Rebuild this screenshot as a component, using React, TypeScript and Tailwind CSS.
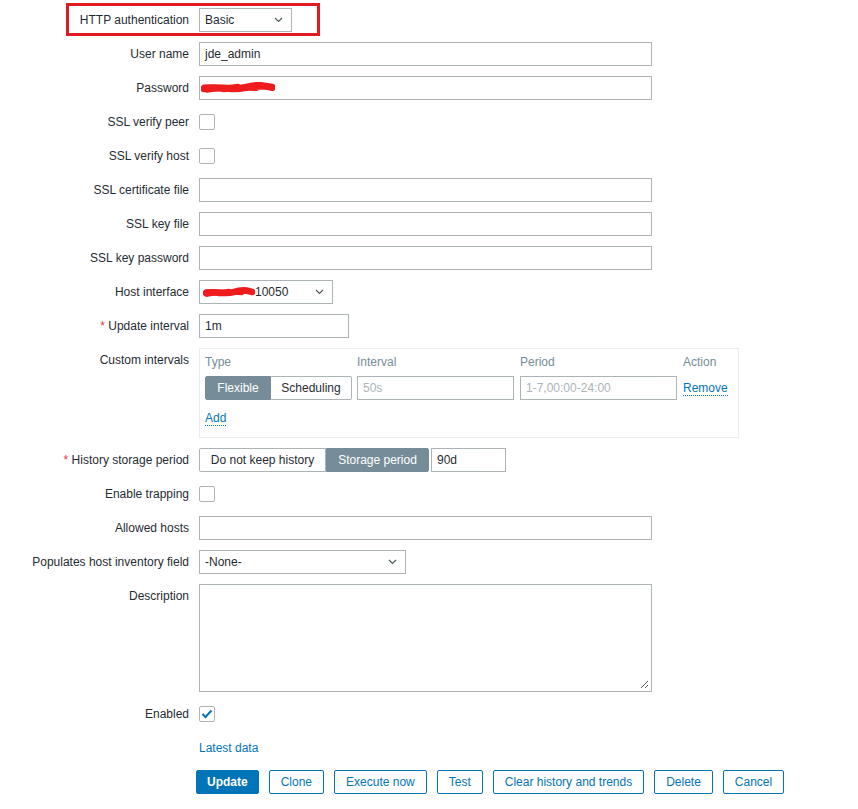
import { ReactNode } from 'react';

const label = 'w-[189px] shrink-0 text-right leading-[24px]';
const input = 'h-[24px] border border-[#acb4b8] bg-white px-[5px] leading-[22px]';

const Chevron = () => (
  <svg width="9" height="6" viewBox="0 0 9 6" className="shrink-0">
    <polyline points="1,1 4.5,4.5 8,1" fill="none" stroke="#4f5b61" strokeWidth="1.2" />
  </svg>
);

// hand-drawn red marker strokes hiding a value
const Scribble = ({ w, h }: { w: number; h: number }) => (
  <svg width={w} height={h} viewBox={`0 0 ${w} ${h}`} className="shrink-0">
    <path
      d={`M3 ${h * 0.55} C ${w * 0.2} ${h * 0.3}, ${w * 0.4} ${h * 0.75}, ${w * 0.6} ${h * 0.45} S ${w * 0.85} ${h * 0.35}, ${w - 3} ${h * 0.45}`}
      fill="none"
      stroke="#ee1c1c"
      strokeWidth={h * 0.6}
      strokeLinecap="round"
    />
    <path
      d={`M3 ${h * 0.4} L ${w * 0.75} ${h * 0.55} M ${w * 0.08} ${h * 0.7} L ${w * 0.5} ${h * 0.35} M ${w * 0.3} ${h * 0.65} L ${w * 0.9} ${h * 0.4}`}
      fill="none"
      stroke="#ee1c1c"
      strokeWidth={h * 0.4}
      strokeLinecap="round"
    />
  </svg>
);

const Row = ({ title, required, children }: { title: string; required?: boolean; children: ReactNode }) => (
  <div className="flex items-start gap-[10px]">
    <div className={label}>
      {required && <span className="text-[#e33734]">* </span>}
      {title}
    </div>
    {children}
  </div>
);

const Checkbox = ({ checked }: { checked?: boolean }) => (
  <div className="flex h-[24px] items-center">
    <div className="flex h-[16px] w-[16px] items-center justify-center rounded-[2px] border border-[#acb4b8] bg-white">
      {checked && (
        <svg width="12" height="10" viewBox="0 0 12 10">
          <polyline points="1.5,5 4.5,8 10.5,1.5" fill="none" stroke="#0275b8" strokeWidth="2" />
        </svg>
      )}
    </div>
  </div>
);

const Button = ({ children, primary }: { children: ReactNode; primary?: boolean }) => (
  <div
    className={
      primary
        ? 'flex h-[24px] items-center rounded-[2px] border border-[#0275b8] bg-[#0275b8] px-[10px] font-bold text-white'
        : 'flex h-[24px] items-center rounded-[2px] border border-[#0275b8] bg-white px-[11px] text-[#0275b8]'
    }
  >
    {children}
  </div>
);

export default function App() {
  return (
    <div className="relative min-h-[809px] bg-white pt-[8px] text-[12px] text-[#1f2c33] font-['Liberation_Sans',Arial,sans-serif]">
      <div className="flex flex-col gap-[10px]">
        <Row title="HTTP authentication">
          <div className={`${input} flex w-[93px] items-center justify-between pr-[8px]`}>
            <span>Basic</span>
            <Chevron />
          </div>
        </Row>

        <Row title="User name">
          <div className={`${input} w-[453px]`}>jde_admin</div>
        </Row>

        <Row title="Password">
          <div className={`${input} flex w-[453px] items-center pl-[1px]`}>
            <Scribble w={74} h={12} />
          </div>
        </Row>

        <Row title="SSL verify peer">
          <Checkbox />
        </Row>
        <Row title="SSL verify host">
          <Checkbox />
        </Row>
        <Row title="SSL certificate file">
          <div className={`${input} w-[453px]`} />
        </Row>
        <Row title="SSL key file">
          <div className={`${input} w-[453px]`} />
        </Row>
        <Row title="SSL key password">
          <div className={`${input} w-[453px]`} />
        </Row>

        <Row title="Host interface">
          <div className={`${input} flex w-[134px] items-center justify-between pl-[3px] pr-[8px]`}>
            <span className="flex items-center">
              <Scribble w={52} h={11} />
              <span>10050</span>
            </span>
            <Chevron />
          </div>
        </Row>

        <Row title="Update interval" required>
          <div className={`${input} w-[150px]`}>1m</div>
        </Row>

        <Row title="Custom intervals">
          <div className="h-[90px] w-[540px] border border-[#ebeef0] px-[5px] pt-[5px]">
            <div className="flex leading-[16px] text-[#768d99]">
              <div className="w-[152px]">Type</div>
              <div className="w-[163px]">Interval</div>
              <div className="w-[163px]">Period</div>
              <div>Action</div>
            </div>
            <div className="mt-[6px] flex items-center">
              <div className="flex w-[152px]">
                <div className="flex h-[24px] w-[66px] items-center justify-center rounded-l-[2px] border border-[#768d99] bg-[#768d99] text-white">
                  Flexible
                </div>
                <div className="flex h-[24px] w-[81px] items-center justify-center rounded-r-[2px] border border-l-0 border-[#acb4b8] bg-white">
                  Scheduling
                </div>
              </div>
              <div className="w-[163px]">
                <div className={`${input} w-[157px] text-[#acb4b8]`}>50s</div>
              </div>
              <div className="w-[163px]">
                <div className={`${input} w-[157px] text-[#acb4b8]`}>1-7,00:00-24:00</div>
              </div>
              <span className="border-b border-dotted border-[#0275b8] leading-[14px] text-[#0275b8]">Remove</span>
            </div>
            <div className="mt-[11px] flex">
              <span className="border-b border-dotted border-[#0275b8] leading-[14px] text-[#0275b8]">Add</span>
            </div>
          </div>
        </Row>

        <Row title="History storage period" required>
          <div className="flex items-center">
            <div className="flex h-[24px] w-[127px] items-center justify-center rounded-l-[2px] border border-[#acb4b8] bg-white">
              Do not keep history
            </div>
            <div className="flex h-[24px] w-[103px] items-center justify-center rounded-r-[2px] border border-[#768d99] bg-[#768d99] text-white">
              Storage period
            </div>
            <div className={`${input} ml-[2px] w-[75px]`}>90d</div>
          </div>
        </Row>

        <Row title="Enable trapping">
          <Checkbox />
        </Row>

        <Row title="Allowed hosts">
          <div className={`${input} w-[453px]`} />
        </Row>

        <Row title="Populates host inventory field">
          <div className={`${input} flex w-[207px] items-center justify-between pr-[8px]`}>
            <span>-None-</span>
            <Chevron />
          </div>
        </Row>

        <Row title="Description">
          <div className="relative h-[108px] w-[453px] border border-[#acb4b8] bg-white">
            <svg width="9" height="9" viewBox="0 0 9 9" className="absolute bottom-[2px] right-[2px]">
              <path d="M1 8 L8 1 M5 8 L8 5" stroke="#5a5a5a" strokeWidth="1" />
            </svg>
          </div>
        </Row>

        <Row title="Enabled">
          <Checkbox checked />
        </Row>

        <div className="flex gap-[10px]">
          <div className="w-[189px] shrink-0" />
          <span className="leading-[24px] text-[#0275b8]">Latest data</span>
        </div>

        <div className="flex gap-[10px] pl-[196px]">
          <Button primary>Update</Button>
          <Button>Clone</Button>
          <Button>Execute now</Button>
          <Button>Test</Button>
          <Button>Clear history and trends</Button>
          <Button>Delete</Button>
          <Button>Cancel</Button>
        </div>
      </div>

      {/* red annotation frame round the first row */}
      <div className="pointer-events-none absolute left-[66px] top-[3px] h-[33px] w-[254px] border-[3px] border-[#e21a22]" />
    </div>
  );
}
